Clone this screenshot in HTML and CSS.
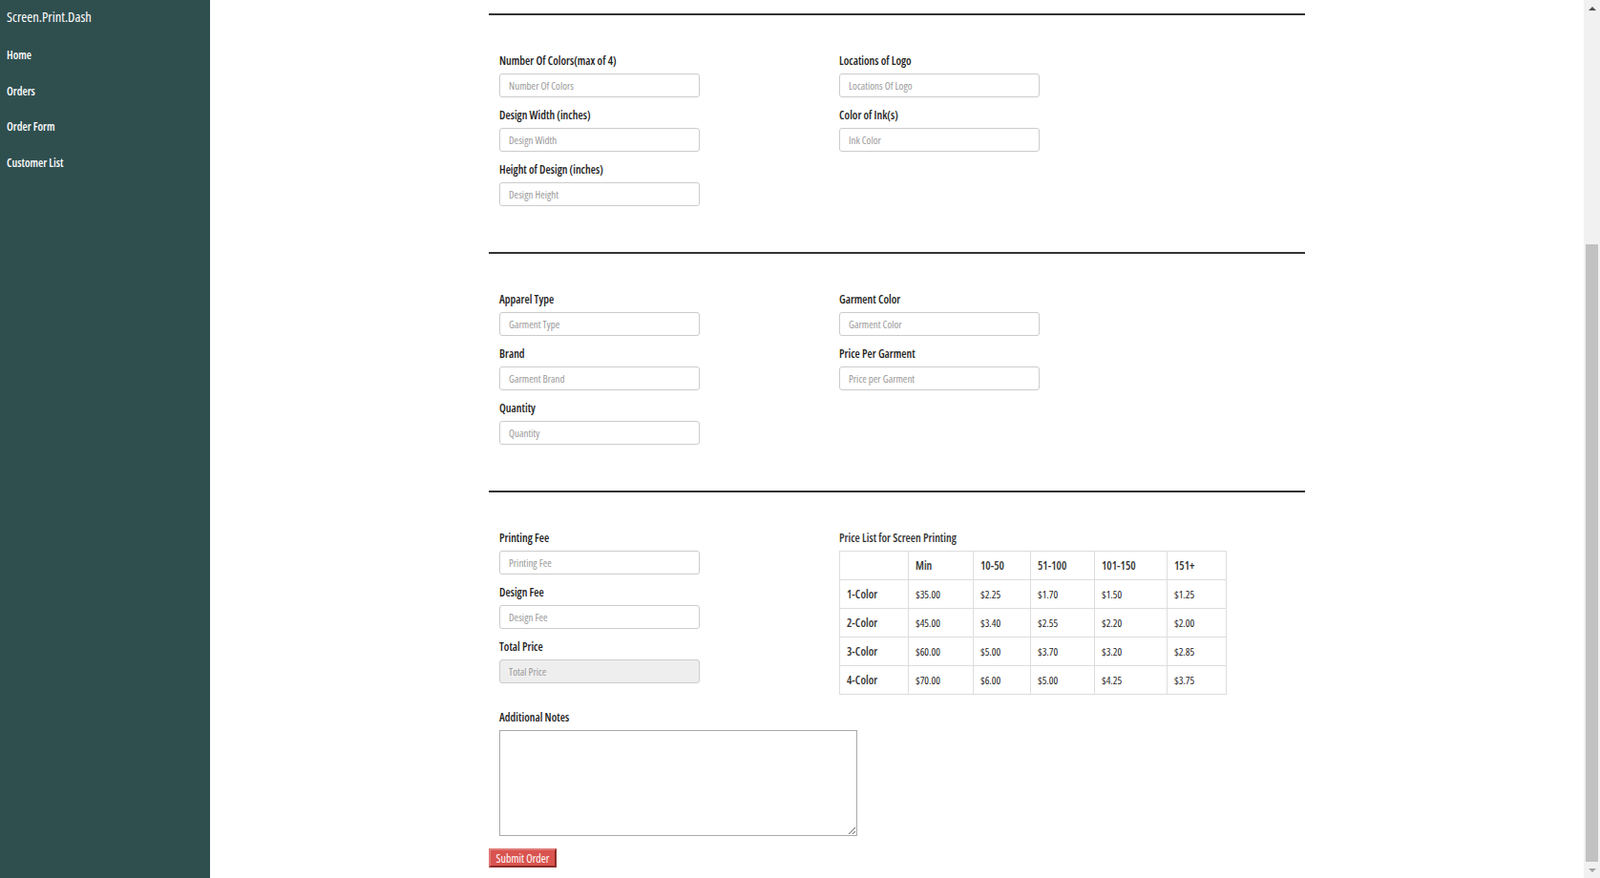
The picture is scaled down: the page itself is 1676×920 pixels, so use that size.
FILE: index.html
```html
<!DOCTYPE html>
<html lang="en">
<head>
  <meta charset="UTF-8" />
  <meta name="viewport" content="width=device-width, initial-scale=1.0"/>
  <title>Screen.Print.Dash - Order Form</title>
  <link rel="stylesheet" href="styles.css">
</head>
<body>
  <div class="sidebar">
    <div class="brand">Screen.Print.Dash</div>
    <a href="#" class="nav-link">Home</a>
    <a href="#" class="nav-link">Orders</a>
    <a href="#" class="nav-link">Order Form</a>
    <a href="#" class="nav-link">Customer List</a>
  </div>

  <div class="main">
    <form class="order-form">
      <hr class="divider">
      <div class="section">
        <div class="col">
          <div class="field">
            <label>Number Of Colors(max of 4)</label>
            <input type="text" placeholder="Number Of Colors">
          </div>
          <div class="field">
            <label>Design Width (inches)</label>
            <input type="text" placeholder="Design Width">
          </div>
          <div class="field">
            <label>Height of Design (inches)</label>
            <input type="text" placeholder="Design Height">
          </div>
        </div>
        <div class="col">
          <div class="field">
            <label>Locations of Logo</label>
            <input type="text" placeholder="Locations Of Logo">
          </div>
          <div class="field">
            <label>Color of Ink(s)</label>
            <input type="text" placeholder="Ink Color">
          </div>
        </div>
      </div>

      <hr class="divider">
      <div class="section">
        <div class="col">
          <div class="field">
            <label>Apparel Type</label>
            <input type="text" placeholder="Garment Type">
          </div>
          <div class="field">
            <label>Brand</label>
            <input type="text" placeholder="Garment Brand">
          </div>
          <div class="field">
            <label>Quantity</label>
            <input type="text" placeholder="Quantity">
          </div>
        </div>
        <div class="col">
          <div class="field">
            <label>Garment Color</label>
            <input type="text" placeholder="Garment Color">
          </div>
          <div class="field">
            <label>Price Per Garment</label>
            <input type="text" placeholder="Price per Garment">
          </div>
        </div>
      </div>

      <hr class="divider">
      <div class="section last">
        <div class="col">
          <div class="field">
            <label>Printing Fee</label>
            <input type="text" placeholder="Printing Fee">
          </div>
          <div class="field">
            <label>Design Fee</label>
            <input type="text" placeholder="Design Fee">
          </div>
          <div class="field">
            <label>Total Price</label>
            <input type="text" placeholder="Total Price" readonly class="readonly">
          </div>
        </div>
        <div class="col">
          <div class="field">
            <label class="light">Price List for Screen Printing</label>
            <table class="price-table">
              <colgroup>
                <col class="c1"><col class="c2"><col class="c3">
                <col class="c4"><col class="c5"><col class="c6">
              </colgroup>
              <tr><th></th><th>Min</th><th>10-50</th><th>51-100</th><th>101-150</th><th>151+</th></tr>
              <tr><th>1-Color</th><td>$35.00</td><td>$2.25</td><td>$1.70</td><td>$1.50</td><td>$1.25</td></tr>
              <tr><th>2-Color</th><td>$45.00</td><td>$3.40</td><td>$2.55</td><td>$2.20</td><td>$2.00</td></tr>
              <tr><th>3-Color</th><td>$60.00</td><td>$5.00</td><td>$3.70</td><td>$3.20</td><td>$2.85</td></tr>
              <tr><th>4-Color</th><td>$70.00</td><td>$6.00</td><td>$5.00</td><td>$4.25</td><td>$3.75</td></tr>
            </table>
          </div>
        </div>
      </div>

      <div class="notes">
        <label>Additional Notes</label>
        <textarea></textarea>
      </div>
      <button type="button" class="submit">Submit Order</button>
    </form>
  </div>

  <div class="scrollbar">
    <div class="arrow up"></div>
    <div class="track"><div class="thumb"></div></div>
    <div class="arrow down"></div>
  </div>
</body>
</html>
```

FILE: styles.css
```css
body {
  font-family: 'Open Sans', sans-serif;
  font-stretch: condensed;
  margin: 0;
  display: flex;
  height: 100vh;
  overflow: hidden;
  color: #333;
  background: #fff;
}
.sidebar {
  width: 220px;
  flex-shrink: 0;
  background-color: #2f4f4f;
  color: #fff;
  padding: 8px 7px;
  box-sizing: border-box;
  display: flex;
  flex-direction: column;
}
.brand {
  font-size: 14.5px;
  font-weight: 500;
  line-height: 20px;
  margin-bottom: 21px;
}
.nav-link {
  color: #fff;
  text-decoration: none;
  font-weight: 600;
  font-size: 12px;
  line-height: 17px;
  margin-bottom: 20.5px;
}
.main {
  flex: 1;
}
.order-form {
  width: 855px;
  margin: 0 auto;
  padding-top: 14px;
}
.divider {
  margin: 0;
  border: none;
  border-top: 2px solid #333;
}
.section {
  display: flex;
  padding: 39px 0 48px 11px;
}
.section.last {
  padding-bottom: 15px;
}
.col {
  width: 356px;
  display: flex;
  flex-direction: column;
  gap: 10px;
}
.field label, .notes label {
  display: block;
  font-size: 12px;
  font-weight: 600;
  line-height: 17px;
  margin-bottom: 5px;
  color: #222;
}
.field label.light {
  color: #333;
}
.field input {
  display: block;
  width: 210px;
  height: 25px;
  box-sizing: border-box;
  border: 1px solid #ccc;
  border-radius: 3px;
  padding: 0 9px;
  font-family: inherit;
  font-stretch: condensed;
  font-size: 11px;
  color: #555;
}
.field input::placeholder {
  color: #999;
}
.field input.readonly {
  background: #eee;
}
.price-table {
  border-collapse: collapse;
  table-layout: fixed;
  width: 405px;
  font-size: 12px;
  color: #333;
}
.price-table .c1 { width: 72px; }
.price-table .c2 { width: 68px; }
.price-table .c3 { width: 60px; }
.price-table .c4 { width: 67px; }
.price-table .c5 { width: 76px; }
.price-table .c6 { width: 62px; }
.price-table th, .price-table td {
  border: 1px solid #ddd;
  height: 29px;
  padding: 0 7px;
  text-align: left;
  font-weight: 600;
}
.price-table td {
  font-size: 11px;
  font-weight: 400;
  color: #222;
}
.notes {
  padding-left: 11px;
}
.notes textarea {
  display: block;
  width: 375px;
  height: 111px;
  box-sizing: border-box;
  border: 1px solid #aaa;
  margin: 0;
}
.submit {
  margin-top: 13px;
  width: 71px;
  height: 20px;
  padding: 0;
  background: #d9534f;
  color: #fff;
  border: 2px solid;
  border-color: #e07a77 #8b2a27 #8b2a27 #e07a77;
  font-family: inherit;
  font-stretch: condensed;
  font-size: 12px;
  font-weight: 500;
  cursor: pointer;
}
.scrollbar {
  width: 17px;
  flex-shrink: 0;
  background: #f1f1f1;
  display: flex;
  flex-direction: column;
}
.arrow {
  height: 17px;
  display: flex;
  justify-content: center;
  align-items: center;
}
.arrow::before {
  content: "";
  border-left: 4px solid transparent;
  border-right: 4px solid transparent;
}
.arrow.up::before {
  border-bottom: 4px solid #505050;
}
.arrow.down::before {
  border-top: 4px solid #a3a3a3;
}
.track {
  flex: 1;
  padding: 0 2px;
}
.thumb {
  margin-top: 239px;
  height: 647px;
  background: #c1c1c1;
}
```
